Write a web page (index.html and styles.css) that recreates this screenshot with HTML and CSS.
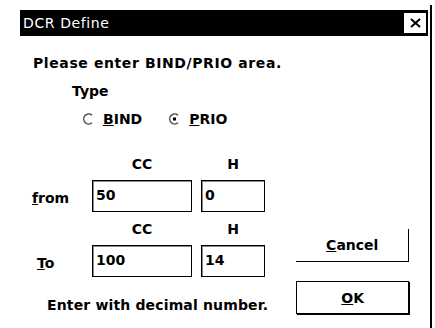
FILE: index.html
```html
<!DOCTYPE html>
<html lang="en">
<head>
    <meta charset="UTF-8">
    <title>DCR Define</title>
    <link rel="stylesheet" href="styles.css">
</head>
<body>

<div class="window">
    <div class="titlebar">
        <span class="title">DCR Define</span>
        <span class="close">
            <svg width="11" height="10" viewBox="0 0 11 10"><path d="M1 1 L10 9 M10 1 L1 9" stroke="#000" stroke-width="2"/></svg>
        </span>
    </div>

    <div class="content">
        <p class="prompt">Please enter BIND/PRIO area.</p>

        <!-- Type selection -->
        <p class="type-label">Type</p>
        <div class="radios">
            <label class="radio">
                <svg width="11" height="12" viewBox="0 0 11 12"><path d="M9 2.2 A5 5 0 1 0 9 9.8" fill="none" stroke="#444" stroke-width="1.4"/></svg>
                <span><u>B</u>IND</span>
            </label>
            <label class="radio">
                <svg width="11" height="12" viewBox="0 0 11 12"><path d="M9 2.2 A5 5 0 1 0 9 9.8" fill="none" stroke="#444" stroke-width="1.4"/><rect x="4" y="4.5" width="3" height="3" fill="#000"/></svg>
                <span><u>P</u>RIO</span>
            </label>
        </div>

        <div class="bottom">
            <div class="left">
                <div class="grid">
                    <span></span>
                    <span class="head">CC</span>
                    <span class="head">H</span>

                    <span class="row-label"><u>f</u>rom</span>
                    <div class="field">50</div>
                    <div class="field">0</div>

                    <span></span>
                    <span class="head">CC</span>
                    <span class="head">H</span>

                    <span class="row-label to"><u>T</u>o</span>
                    <div class="field">100</div>
                    <div class="field">14</div>
                </div>
                <p class="hint">Enter with decimal number.</p>
            </div>

            <div class="buttons">
                <button class="btn cancel"><u>C</u>ancel</button>
                <button class="btn ok"><u>O</u>K</button>
            </div>
        </div>
    </div>
</div>

</body>
</html>
```

FILE: styles.css
```css
body {
    margin: 0;
    background: #fff;
    font-family: 'DejaVu Sans', sans-serif;
    font-weight: bold;
    font-size: 14px;
    color: #000;
}
p {
    margin: 0;
}
.window {
    width: 432px;
    height: 323px;
    margin-top: 5px;
    border-right: 2px solid #000;
    box-sizing: border-box;
    overflow: hidden;
}
.titlebar {
    margin: 5px 2px 0 20px;
    height: 26px;
    background: #000;
    display: flex;
    align-items: center;
    justify-content: space-between;
    padding: 0 2px 0 3px;
}
.title {
    color: #fff;
    font-weight: normal;
    font-size: 14px;
    letter-spacing: 0.6px;
}
.close {
    width: 22px;
    height: 20px;
    background: #fff;
    display: flex;
    align-items: center;
    justify-content: center;
}
.content {
    padding-left: 32px;
}
.prompt {
    margin-top: 18px;
    line-height: 18px;
    padding-left: 1px;
    letter-spacing: 0.6px;
}
.type-label {
    margin-top: 10px;
    margin-left: 40px;
    line-height: 18px;
}
.radios {
    display: flex;
    gap: 27px;
    margin-top: 10px;
    margin-left: 51px;
    line-height: 18px;
}
.radio {
    display: flex;
    align-items: center;
    gap: 9px;
}
.bottom {
    display: flex;
    margin-top: 28px;
}
.left {
    flex: 0 0 236px;
    white-space: nowrap;
}
.grid {
    display: grid;
    grid-template-columns: 51px 100px 64px;
    grid-template-rows: 16px 32px 17px 32px;
    column-gap: 9px;
    row-gap: 8px;
}
.head {
    text-align: center;
    align-self: end;
    line-height: 16px;
}
.row-label {
    align-self: center;
    padding-top: 4px;
}
.row-label.to {
    padding-left: 5px;
}
.field {
    border: 1px solid #000;
    box-shadow: inset 1px 1px 0 #888;
    padding: 6px 0 0 3px;
    box-sizing: border-box;
}
.hint {
    margin-top: 19px;
    margin-left: 15px;
    line-height: 18px;
    letter-spacing: 0.15px;
}
.buttons {
    display: flex;
    flex-direction: column;
    gap: 19px;
    margin-left: 28px;
    padding-top: 73px;
}
.btn {
    width: 113px;
    height: 33px;
    font: inherit;
    background: #fff;
    padding: 0;
    color: #000;
}
.cancel {
    border: none;
    border-right: 1px solid #000;
    border-bottom: 1px solid #000;
}
.ok {
    border: 1px solid #000;
    box-shadow: 1px 1px 0 #000;
}
```
